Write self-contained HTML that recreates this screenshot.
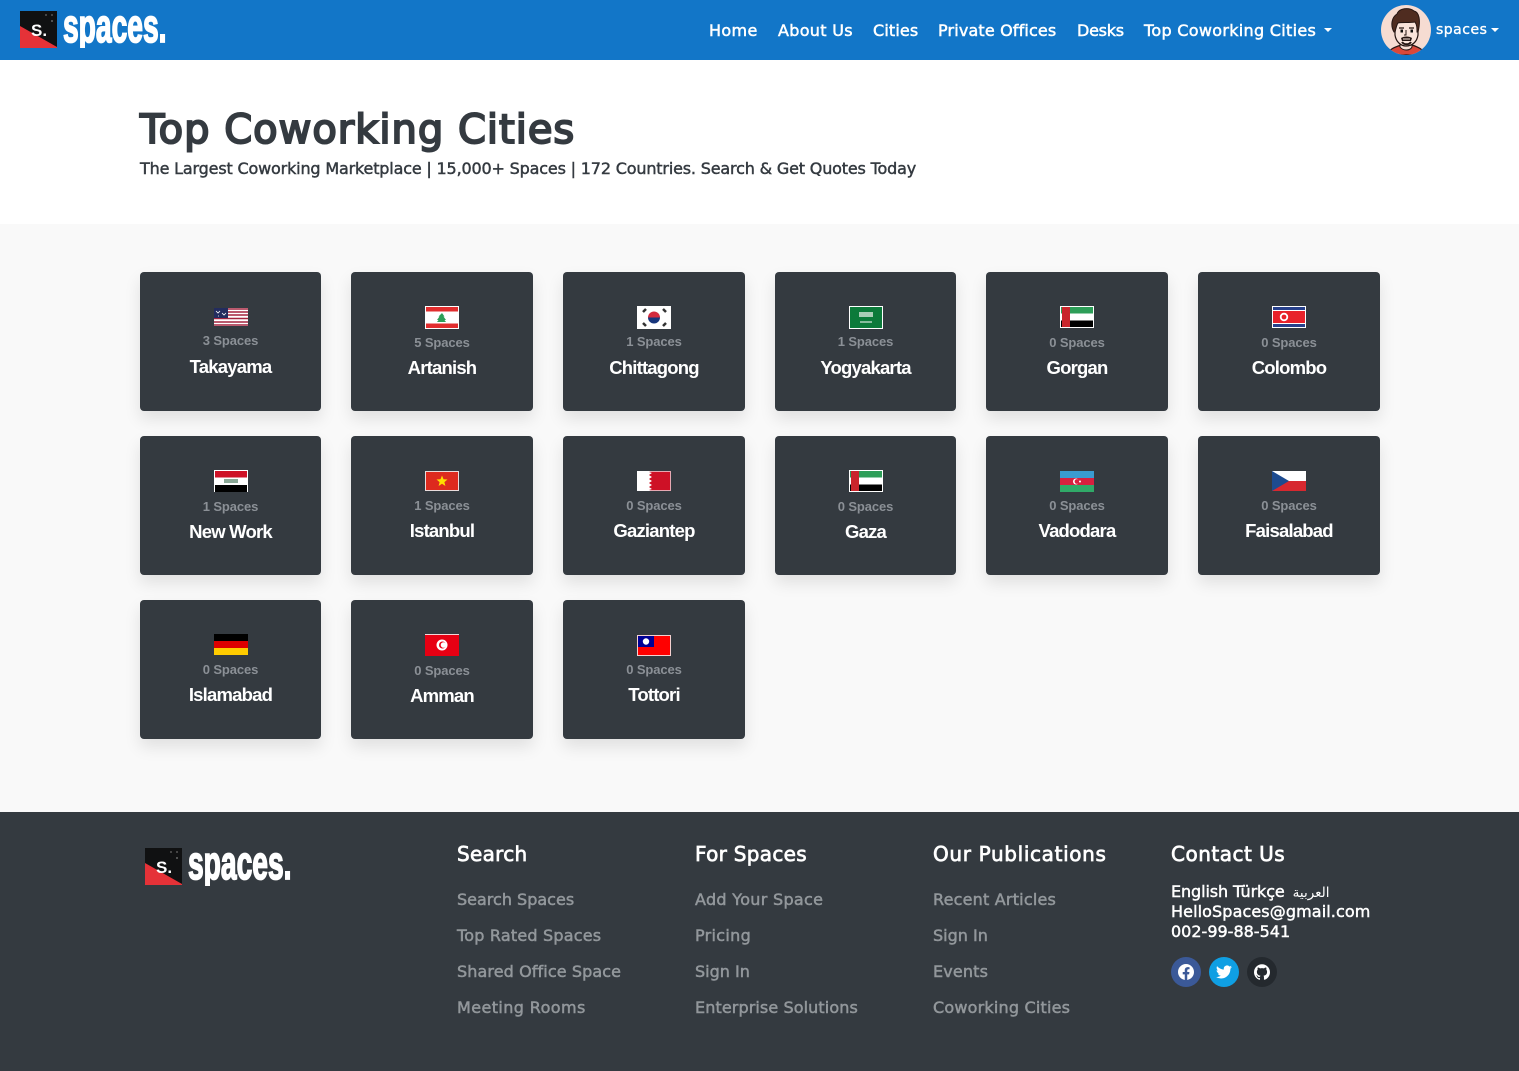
<!DOCTYPE html>
<html lang="en"><head><meta charset="utf-8"><title>Top Coworking Cities</title>
<style>
html,body{margin:0;padding:0}
body{position:relative;width:1519px;height:1071px;overflow:hidden;background:#fff;font-family:"DejaVu Sans","Liberation Sans",sans-serif}
.nav{position:absolute;left:0;top:0;width:1519px;height:60px;background:#1276c8}
.sec{position:absolute;left:0;top:224px;width:1519px;height:588px;background:#f9f9f9}
.foot{position:absolute;left:0;top:812px;width:1519px;height:259px;background:#343a40}
.t{position:absolute;white-space:nowrap;line-height:20px;height:20px}
.n{color:#fff;font-size:16px;letter-spacing:.15px;-webkit-text-stroke:.5px #fff}
.h{color:#fff;font-size:20px;line-height:24px;height:24px;-webkit-text-stroke:.7px #fff}
.l{color:#92979b;font-size:16px;-webkit-text-stroke:.5px #92979b}
.c{color:#fff;font-size:16px;-webkit-text-stroke:.45px #fff}
.card{position:absolute;height:139px;background:#343a40;border-radius:4px;box-shadow:0 8px 16px rgba(0,0,0,.1)}
.card svg{position:absolute;left:50%;margin-left:-17px}
.sp,.nm{position:absolute;left:0;right:0;text-align:center;font-family:"Liberation Sans",sans-serif;font-weight:700;white-space:nowrap}
.sp{font-size:13px;line-height:16px;color:#8b9096;letter-spacing:-.1px}
.nm{font-size:18.5px;line-height:24px;color:#fff;letter-spacing:-.8px;margin-top:1px}
.caret{position:absolute;width:0;height:0;border-left:4.5px solid transparent;border-right:4.5px solid transparent;border-top:4.5px solid #fff}
.soc{position:absolute;top:957px;width:30px;height:30px;border-radius:50%}
.soc svg{position:absolute;left:7px;top:7px}
.lg{position:absolute}
</style></head><body>

<div class="nav"></div>
<svg class="lg" style="left:20px;top:11px" width="150" height="37" viewBox="0 0 150 37">
<rect width="37" height="37" fill="#101112"/><path d="M0 15L37 36V37H0Z" fill="#e53238"/>
<circle cx="26" cy="4" r="1" fill="#555"/><circle cx="32" cy="4" r="1" fill="#555"/><circle cx="32" cy="10" r="1" fill="#666"/>
<text x="11" y="25" font-family="Liberation Sans" font-weight="700" font-size="17" fill="#fff">S.</text>
<text transform="translate(43 31) scale(.6 1)" font-family="Liberation Sans" font-weight="700" font-size="47" fill="#fff" stroke="#fff" stroke-width="1.8">spaces.</text>
</svg>

<div class="t n" style="left:709px;top:21px;letter-spacing:.35px">Home</div>
<div class="t n" style="left:778px;top:21px;letter-spacing:.3px">About Us</div>
<div class="t n" style="left:873px;top:21px">Cities</div>
<div class="t n" style="left:938px;top:21px">Private Offices</div>
<div class="t n" style="left:1077px;top:21px;letter-spacing:-.25px">Desks</div>
<div class="t n" style="left:1144px;top:21px;letter-spacing:.3px">Top Coworking Cities</div>
<div class="caret" style="left:1324px;top:28px"></div>

<svg class="lg" style="left:1381px;top:5px" width="50" height="50" viewBox="0 0 50 50">
<defs><clipPath id="av"><circle cx="25" cy="25" r="25"/></clipPath></defs>
<g clip-path="url(#av)">
<rect width="50" height="50" fill="#f6dcd2"/>
<path d="M6 50C8 44 14 42 20 40H31C37 42 42 44 45 50Z" fill="#d9483b" stroke="#241512" stroke-width="1.2"/>
<path d="M19 33V42C22 46 29 46 31 42V33Z" fill="#f6dcd2" stroke="#241512" stroke-width="1"/>
<path d="M14 18V30C15 37 20 41 25 41C31 41 36 37 37 30V18C32 12 19 12 14 18Z" fill="#f9e3da" stroke="#241512" stroke-width="1.2"/>
<path d="M13 27C9 20 11 12 16 9C18 3 28 2 33 6C38 7 40 15 37 27L36 27C36 23 36 20 34 17C28 18 21 17 17 18C15 21 15 24 14 27Z" fill="#4f2c20" stroke="#241512" stroke-width="1"/>
<path d="M18 23h5M28 23h5" stroke="#241512" stroke-width="1.2"/>
<rect x="19.5" y="24.500" width="2.500" height="3" fill="#111"/><rect x="29.500" y="24.500" width="2.500" height="3" fill="#111"/>
<path d="M25 25V30H23" fill="none" stroke="#241512" stroke-width="1"/>
<path d="M20 33C23 31 28 31 31 33L30 36H21Z" fill="#241512"/>
<path d="M22 34H29" stroke="#f9e3da" stroke-width="1"/>
<path d="M21 37C23 40 28 40 30 37" fill="none" stroke="#241512" stroke-width="2"/>
</g></svg>
<div class="t n" style="left:1436px;top:20px;font-size:14px;letter-spacing:.5px;-webkit-text-stroke:.35px #fff">spaces</div>
<div class="caret" style="left:1491px;top:28px;border-width:4px 4px 0"></div>

<div class="t" style="left:140px;top:104px;height:52px;line-height:52px;font-size:40px;letter-spacing:1px;color:#343a40;-webkit-text-stroke:2px #343a40">Top Coworking Cities</div>
<div class="t" style="left:140px;top:159px;font-size:16px;letter-spacing:-.17px;color:#343a40;-webkit-text-stroke:.45px #343a40">The Largest Coworking Marketplace | 15,000+ Spaces | 172 Countries. Search &amp; Get Quotes Today</div>

<div class="sec"></div>

<!-- Row 1 -->
<div class="card" style="left:140px;top:272px;width:181px">
<svg style="top:36px" width="34" height="18" viewBox="0 0 34 18"><rect width="34" height="18" fill="#fff"/><path d="M0 1h34M0 4h34M0 7h34M0 10.500h34M0 14h34M0 17h34" stroke="#a3243f" stroke-width="1.400"/><rect width="14" height="10" fill="#232c5e"/><path d="M2 3l2 2 2-2M8 5l2 2 2-2M4 8h1" stroke="#fff" stroke-width=".8" fill="none"/></svg>
<div class="sp" style="top:61px">3 Spaces</div><div class="nm" style="top:82px">Takayama</div></div>

<div class="card" style="left:351px;top:272px;width:182px">
<svg style="top:34px" width="34" height="23" viewBox="0 0 34 23"><rect width="34" height="23" fill="#fff"/><rect x="1" y="1" width="32" height="4.500" fill="#e12d2e"/><rect x="1" y="17.500" width="32" height="4.500" fill="#e12d2e"/><path d="M17 7l2.500 3.500-1 0 2.500 3.500-1.500 0 1.500 2H12l1.500-2-1.500 0 2.500-3.500-1 0Z" fill="#2d9e58"/></svg>
<div class="sp" style="top:63px">5 Spaces</div><div class="nm" style="top:83px">Artanish</div></div>

<div class="card" style="left:563px;top:272px;width:182px">
<svg style="top:34px" width="34" height="23" viewBox="0 0 34 23"><rect width="34" height="23" fill="#fff"/><path d="M11 11.500a6 6 0 0 1 12 0Z" fill="#d32a3e"/><path d="M11 11.500a6 6 0 0 0 12 0Z" fill="#17357c"/><path d="M6 6l3-3M26 3l3 3M6 17l3 3M26 20l3-3" stroke="#333" stroke-width="2.500"/></svg>
<div class="sp" style="top:62px">1 Spaces</div><div class="nm" style="top:83px">Chittagong</div></div>

<div class="card" style="left:775px;top:272px;width:181px">
<svg style="top:34px" width="34" height="23" viewBox="0 0 34 23"><rect width="34" height="23" fill="#fff"/><rect x="1" y="1" width="32" height="21" fill="#0c7a3a"/><rect x="10" y="6" width="14" height="5" fill="#a9cdb6"/><path d="M11 16h12" stroke="#fff"/></svg>
<div class="sp" style="top:62px">1 Spaces</div><div class="nm" style="top:83px">Yogyakarta</div></div>

<div class="card" style="left:986px;top:272px;width:182px">
<svg style="top:34px" width="34" height="22" viewBox="0 0 34 22"><rect width="34" height="22" fill="#fff"/><rect x="1" y="1" width="32" height="6.500" fill="#2d9e58"/><rect x="1" y="14.500" width="32" height="6.500" fill="#000"/><rect x="2" y="1" width="8" height="20" fill="#c9252c"/></svg>
<div class="sp" style="top:63px">0 Spaces</div><div class="nm" style="top:83px">Gorgan</div></div>

<div class="card" style="left:1198px;top:272px;width:182px">
<svg style="top:34px" width="34" height="22" viewBox="0 0 34 22"><rect width="34" height="22" fill="#fff"/><rect x="1" y="1" width="32" height="3" fill="#27408b"/><rect x="1" y="18" width="32" height="3" fill="#27408b"/><rect x="1" y="5" width="32" height="12" fill="#e8222a"/><circle cx="12" cy="11" r="4.200" fill="#fff"/><circle cx="12" cy="11" r="2.400" fill="#e8222a"/></svg>
<div class="sp" style="top:63px">0 Spaces</div><div class="nm" style="top:83px">Colombo</div></div>

<!-- Row 2 -->
<div class="card" style="left:140px;top:436px;width:181px">
<svg style="top:34px" width="34" height="22" viewBox="0 0 34 22"><rect width="34" height="22" fill="#fff"/><rect x="1" y="1" width="32" height="6.500" fill="#ce1126"/><rect x="1" y="15" width="32" height="7" fill="#000"/><rect x="10" y="9" width="14" height="4" fill="#8aa896"/></svg>
<div class="sp" style="top:63px">1 Spaces</div><div class="nm" style="top:83px">New Work</div></div>

<div class="card" style="left:351px;top:436px;width:182px">
<svg style="top:35px" width="34" height="20" viewBox="0 0 34 20"><rect width="34" height="20" fill="#e9dcdc"/><rect x="1" y="1" width="32" height="18" fill="#dd2a1e"/><path d="M17 4.500l1.500 3.800 4 .2-3.100 2.600 1 3.900-3.400-2.200-3.400 2.200 1-3.900-3.100-2.600 4-.2Z" fill="#fd0"/></svg>
<div class="sp" style="top:62px">1 Spaces</div><div class="nm" style="top:82px">Istanbul</div></div>

<div class="card" style="left:563px;top:436px;width:182px">
<svg style="top:35px" width="34" height="20" viewBox="0 0 34 20"><rect width="34" height="20" fill="#e6a8b2"/><path d="M0 0H12L15 2 12 4 15 6 12 8 15 10 12 12 15 14 12 16 15 18 12 20H0Z" fill="#fff"/><path d="M12 1H33V19H12L15 18 12 16 15 14 12 12 15 10 12 8 15 6 12 4 15 2Z" fill="#ce1126"/></svg>
<div class="sp" style="top:62px">0 Spaces</div><div class="nm" style="top:82px">Gaziantep</div></div>

<div class="card" style="left:775px;top:436px;width:181px">
<svg style="top:34px" width="34" height="22" viewBox="0 0 34 22"><rect width="34" height="22" fill="#fff"/><rect x="1" y="1" width="32" height="6.500" fill="#2d9e58"/><rect x="1" y="14.500" width="32" height="6.500" fill="#000"/><rect x="2" y="1" width="8" height="20" fill="#c9252c"/></svg>
<div class="sp" style="top:63px">0 Spaces</div><div class="nm" style="top:83px">Gaza</div></div>

<div class="card" style="left:986px;top:436px;width:182px">
<svg style="top:35px" width="34" height="21" viewBox="0 0 34 21"><rect width="34" height="7" fill="#3a9bd0"/><rect y="7" width="34" height="7" fill="#d8203f"/><rect y="14" width="34" height="7" fill="#30a968"/><circle cx="16" cy="10.500" r="3" fill="#fff"/><circle cx="17" cy="10.500" r="2.400" fill="#d8203f"/><circle cx="20" cy="10.500" r="1" fill="#fff"/></svg>
<div class="sp" style="top:62px">0 Spaces</div><div class="nm" style="top:82px">Vadodara</div></div>

<div class="card" style="left:1198px;top:436px;width:182px">
<svg style="top:35px" width="34" height="20" viewBox="0 0 34 20"><rect width="34" height="10" fill="#fff"/><rect y="10" width="34" height="10" fill="#d7282f"/><path d="M0 0L17 10 0 20Z" fill="#1d4b8f"/></svg>
<div class="sp" style="top:62px">0 Spaces</div><div class="nm" style="top:82px">Faisalabad</div></div>

<!-- Row 3 -->
<div class="card" style="left:140px;top:600px;width:181px">
<svg style="top:34px" width="34" height="21" viewBox="0 0 34 21"><rect width="34" height="7" fill="#000"/><rect y="7" width="34" height="7" fill="#d00"/><rect y="14" width="34" height="7" fill="#fc0"/></svg>
<div class="sp" style="top:62px">0 Spaces</div><div class="nm" style="top:82px">Islamabad</div></div>

<div class="card" style="left:351px;top:600px;width:182px">
<svg style="top:34px" width="34" height="22" viewBox="0 0 34 22"><rect width="34" height="22" fill="#e70013"/><rect width="34" height="1" fill="#f4d5d8"/><circle cx="17" cy="11" r="5.500" fill="#fff"/><circle cx="17.500" cy="11" r="3.500" fill="#e70013"/><circle cx="18.500" cy="11" r="2.800" fill="#fff"/></svg>
<div class="sp" style="top:63px">0 Spaces</div><div class="nm" style="top:83px">Amman</div></div>

<div class="card" style="left:563px;top:600px;width:182px">
<svg style="top:35px" width="34" height="21" viewBox="0 0 34 21"><rect width="34" height="21" fill="#f4d0d0"/><rect x="1" y="1" width="32" height="19" fill="#f00"/><rect x="1" y="1" width="16" height="11" fill="#000095"/><circle cx="9" cy="6.500" r="3.200" fill="#fff"/></svg>
<div class="sp" style="top:62px">0 Spaces</div><div class="nm" style="top:82px">Tottori</div></div>

<div class="foot"></div>
<svg class="lg" style="left:145px;top:848px" width="150" height="38" viewBox="0 0 150 38">
<rect width="37" height="37" fill="#101112"/><path d="M0 15L37 36V37H0Z" fill="#e53238"/>
<circle cx="26" cy="4" r="1" fill="#555"/><circle cx="32" cy="4" r="1" fill="#555"/><circle cx="32" cy="10" r="1" fill="#666"/>
<text x="11" y="25" font-family="Liberation Sans" font-weight="700" font-size="17" fill="#fff">S.</text>
<text transform="translate(43 31) scale(.6 1)" font-family="Liberation Sans" font-weight="700" font-size="47" fill="#fff" stroke="#fff" stroke-width="1.8">spaces.</text>
</svg>

<div class="t h" style="left:457px;top:842px;letter-spacing:.3px">Search</div>
<div class="t h" style="left:695px;top:842px;letter-spacing:.3px">For Spaces</div>
<div class="t h" style="left:933px;top:842px;letter-spacing:.65px">Our Publications</div>
<div class="t h" style="left:1171px;top:842px;letter-spacing:.5px">Contact Us</div>

<div class="t l" style="left:457px;top:890px">Search Spaces</div>
<div class="t l" style="left:457px;top:926px;letter-spacing:.2px">Top Rated Spaces</div>
<div class="t l" style="left:457px;top:962px;letter-spacing:.1px">Shared Office Space</div>
<div class="t l" style="left:457px;top:998px;letter-spacing:.4px">Meeting Rooms</div>

<div class="t l" style="left:695px;top:890px;letter-spacing:.3px">Add Your Space</div>
<div class="t l" style="left:695px;top:926px;letter-spacing:.3px">Pricing</div>
<div class="t l" style="left:695px;top:962px">Sign In</div>
<div class="t l" style="left:695px;top:998px;letter-spacing:.1px">Enterprise Solutions</div>

<div class="t l" style="left:933px;top:890px;letter-spacing:.2px">Recent Articles</div>
<div class="t l" style="left:933px;top:926px">Sign In</div>
<div class="t l" style="left:933px;top:962px;letter-spacing:.15px">Events</div>
<div class="t l" style="left:933px;top:998px;letter-spacing:.2px">Coworking Cities</div>

<div class="t c" style="left:1171px;top:882px;letter-spacing:-.1px">English Türkçe <span style="font-size:13.500px;margin-left:3px;-webkit-text-stroke:0">العربية</span></div>
<div class="t c" style="left:1171px;top:902px;letter-spacing:.1px">HelloSpaces@gmail.com</div>
<div class="t c" style="left:1171px;top:922px">002-99-88-541</div>

<div class="soc" style="left:1171px;background:#3b5998"><svg width="16" height="16" viewBox="0 0 24 24"><path fill="#fff" d="M24 12.073c0-6.627-5.373-12-12-12s-12 5.373-12 12c0 5.990 4.388 10.954 10.125 11.854v-8.385H7.078v-3.470h3.047V9.430c0-3.007 1.792-4.669 4.533-4.669 1.312 0 2.686.235 2.686.235v2.953H15.830c-1.491 0-1.956.925-1.956 1.874v2.250h3.328l-.532 3.470h-2.796v8.385C19.612 23.027 24 18.062 24 12.073z"/></svg></div>
<div class="soc" style="left:1209px;background:#0f9fe3"><svg width="16" height="16" viewBox="0 0 24 24"><path fill="#fff" d="M23.953 4.570a10 10 0 01-2.825.775 4.958 4.958 0 002.163-2.723c-.951.555-2.005.959-3.127 1.184a4.920 4.920 0 00-8.384 4.482C7.690 8.095 4.067 6.130 1.640 3.162a4.822 4.822 0 00-.666 2.475c0 1.710.870 3.213 2.188 4.096a4.904 4.904 0 01-2.228-.616v.060a4.923 4.923 0 003.946 4.827 4.996 4.996 0 01-2.212.085 4.936 4.936 0 004.604 3.417 9.867 9.867 0 01-6.102 2.105c-.390 0-.779-.023-1.170-.067a13.995 13.995 0 007.557 2.209c9.053 0 13.998-7.496 13.998-13.985 0-.210 0-.420-.015-.630A9.935 9.935 0 0024 4.590z"/></svg></div>
<div class="soc" style="left:1247px;background:#24292e"><svg width="16" height="16" viewBox="0 0 24 24"><path fill="#fff" d="M12 .297c-6.630 0-12 5.373-12 12 0 5.303 3.438 9.800 8.205 11.385.6.113.82-.258.82-.577 0-.285-.010-1.040-.015-2.040-3.338.724-4.042-1.610-4.042-1.610C4.422 18.070 3.633 17.700 3.633 17.700c-1.087-.744.084-.729.084-.729 1.205.084 1.838 1.236 1.838 1.236 1.070 1.835 2.809 1.305 3.495.998.108-.776.417-1.305.760-1.605-2.665-.3-5.466-1.332-5.466-5.930 0-1.310.465-2.380 1.235-3.220-.135-.303-.540-1.523.105-3.176 0 0 1.005-.322 3.300 1.230.960-.267 1.980-.399 3-.405 1.020.006 2.040.138 3 .405 2.280-1.552 3.285-1.230 3.285-1.230.645 1.653.240 2.873.120 3.176.765.840 1.230 1.910 1.230 3.220 0 4.610-2.805 5.625-5.475 5.920.420.360.810 1.096.810 2.220 0 1.606-.015 2.896-.015 3.286 0 .315.210.690.825.570C20.565 22.092 24 17.592 24 12.297c0-6.627-5.373-12-12-12"/></svg></div>
</body></html>
